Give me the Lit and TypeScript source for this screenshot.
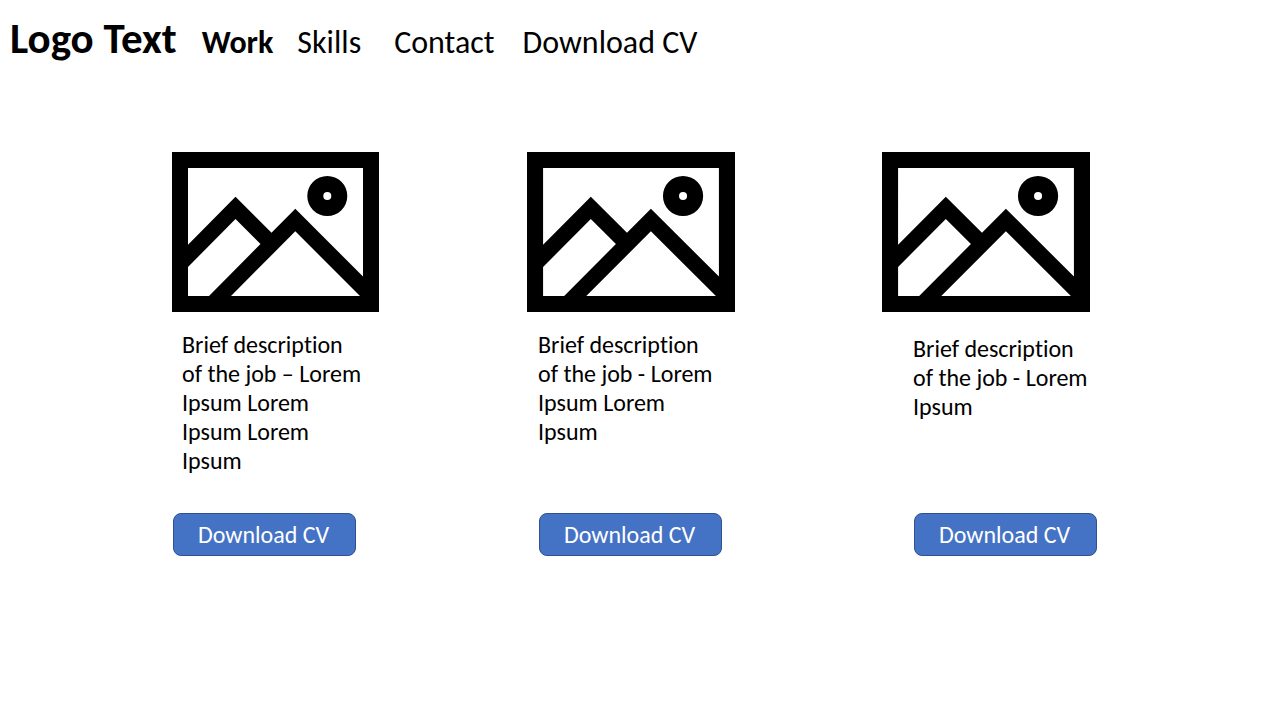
import { LitElement, html, css } from "lit";
import { customElement } from "lit/decorators.js";

interface Job {
  text: string;
  layout: string;
}

const jobs: Job[] = [
  { text: "Brief description\nof the job – Lorem\nIpsum Lorem\nIpsum Lorem\nIpsum", layout: "first" },
  { text: "Brief description\nof the job - Lorem\nIpsum Lorem\nIpsum", layout: "second" },
  { text: "Brief description\nof the job - Lorem\nIpsum", layout: "third" },
];

@customElement("app-root")
export class AppRoot extends LitElement {
  static styles = css`
    :host {
      display: block;
      min-height: 100vh;
      background: #fff;
      color: #000;
      font-family: Carlito, Calibri, Lato, sans-serif;
      font-variant-ligatures: none;
    }
    .header {
      display: flex;
      align-items: baseline;
      padding: 11px 10px 0;
      gap: 25px;
    }
    .logo {
      font-size: 43px;
      line-height: 56px;
      font-weight: 700;
    }
    .nav {
      display: flex;
      align-items: baseline;
      font-size: 32px;
      line-height: 40px;
    }
    .link {
      color: inherit;
      text-decoration: none;
      white-space: nowrap;
      margin-right: 28px;
    }
    .active {
      font-weight: 700;
      margin-right: 24px;
    }
    .skills {
      margin-right: 33px;
    }
    .jobs {
      display: grid;
      grid-template-columns: repeat(3, 1fr);
      padding: 85px 43px 40px 172px;
    }
    .card {
      display: flex;
      flex-direction: column;
      align-items: flex-start;
    }
    .picture {
      display: block;
      width: 208px;
      height: 160px;
    }
    .text {
      margin: 0;
      padding: 18px 0 38px 10px;
      font-size: 24px;
      line-height: 29px;
      white-space: pre-line;
    }
    .button {
      box-sizing: border-box;
      width: 183px;
      height: 43px;
      margin: auto 0 0 1px;
      padding: 0 2px 0 0;
      border: 1px solid #2f528f;
      border-radius: 8px;
      background: #4472c4;
      color: #fff;
      font-family: inherit;
      font-size: 24px;
      line-height: 29px;
    }
    .first .picture {
      width: 207px;
    }
    .second .text {
      padding-left: 11px;
    }
    .second .button {
      margin-left: 12px;
    }
    .third .text {
      padding-top: 22px;
      padding-left: 31px;
    }
    .third .button {
      margin-left: 32px;
    }
  `;

  private picture() {
    return html`<svg
      class="picture"
      viewBox="0 0 207 160"
      preserveAspectRatio="none"
      role="img"
      aria-label="Job picture"
    >
      <path
        fill-rule="evenodd"
        d="M0 0H207V160H0ZM16 16V92.7L63.5 44.7L99.5 80.7L123.3 56.8L191 124.5V16ZM16 115V144H37L88.5 92L63.5 67ZM59 144H188L123.3 79.3Z"
      />
      <path fill-rule="evenodd" d="M135.3 44a20 20 0 1 0 40 0a20 20 0 1 0-40 0ZM151.3 44a4 4 0 1 1 8 0a4 4 0 1 1-8 0Z" />
    </svg>`;
  }

  render() {
    return html`
      <header class="header">
        <div class="logo">Logo Text</div>
        <nav class="nav">
          <a class="link active" href="#work" aria-current="page">Work</a>
          <a class="link skills" href="#skills">Skills</a>
          <a class="link" href="#contact">Contact</a>
          <a class="link" href="#cv">Download CV</a>
        </nav>
      </header>
      <main class="jobs">
        ${jobs.map(
          (job) => html`<article class="card ${job.layout}">
            ${this.picture()}
            <p class="text">${job.text}</p>
            <button class="button" type="button">Download CV</button>
          </article>`
        )}
      </main>
    `;
  }
}
